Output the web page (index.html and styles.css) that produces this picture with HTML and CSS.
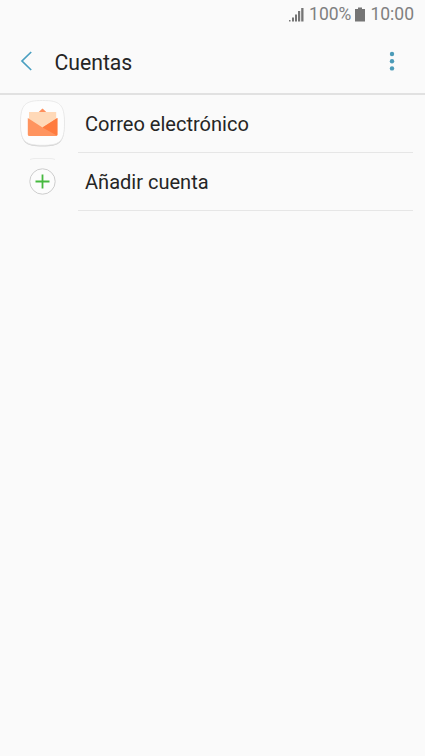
FILE: index.html
```html
<!DOCTYPE html>
<html lang="es">
<head>
<meta charset="utf-8">
<title>Cuentas</title>
<link rel="stylesheet" href="styles.css">
</head>
<body>
<div class="status">
  <svg class="signal" width="15" height="15" viewBox="0 0 15 15"><path d="M0 13h1.500v1.500H0zM3 10.500h2v4H3zM6 7.500h2v7H6zM9 4h2.200v10.500H9zM12.200 1h2.300v13.500h-2.300z"/></svg>
  <span class="percent">100%</span>
  <svg class="battery" width="10" height="15" viewBox="0 0 10 15"><path d="M3 .5h4V2h3v12.500H0V2h3z"/></svg>
  <span class="clock">10:00</span>
</div>
<header class="header">
  <svg class="back" width="12" height="20" viewBox="0 0 12 20"><path d="M11.200 1 2 10l9.200 9"/></svg>
  <h1 class="title">Cuentas</h1>
  <svg class="more" width="6" height="20" viewBox="0 0 6 20"><circle cx="3" cy="3" r="2.200"/><circle cx="3" cy="10.200" r="2.200"/><circle cx="3" cy="17.400" r="2.200"/></svg>
</header>
<main class="list">
  <div class="row">
    <svg class="icon" width="50" height="66" viewBox="-.5 0 50 66">
      <path class="tile-shadow" d="M25 6.500C42 6.500 47 10 47 29S42 51.500 25 51.500 3 48 3 29 8 6.500 25 6.500Z"/>
      <path class="tile" d="M25 5.500C42 5.500 47 9 47 28S42 50.300 25 50.300 3 47 3 28 8 5.500 25 5.500Z"/>
      <path class="flap" d="m20.700 17.500 4.300-3.900 4.300 3.900z"/>
      <path class="letter" d="M11.500 17h27.200V27L25 36 11.500 27z"/>
      <path class="envelope" d="M10.300 23 25 32.500 39.900 23V39.500q0 1.500-1.500 1.500H11.800q-1.500 0-1.500-1.500z"/>
      <path class="fold" d="M25 32.500 39.900 23V39.500q0 .8-.5 1.100z"/>
      <path class="edge" d="M12.500 64.500q2-1 5-1h15q3 0 5 1"/>
    </svg>
    <div class="label">Correo electrónico</div>
  </div>
  <div class="row">
    <svg class="icon" width="50" height="58" viewBox="-.5 0 50 58"><circle class="ring" cx="25" cy="28.500" r="12.700"/><path class="plus" d="M25 21.500v14M18 28.500h14"/></svg>
    <div class="label">Añadir cuenta</div>
  </div>
</main>
</body>
</html>
```
FILE: styles.css
```css
* { box-sizing: border-box; }
body {
  margin: 0;
  min-height: 756px;
  background: #fafafa;
  color: #252525;
  font-family: Roboto, sans-serif;
}
.status {
  height: 28px;
  padding-right: 11px;
  display: flex;
  justify-content: flex-end;
  align-items: center;
  color: #808080;
  font-size: 17.5px;
  line-height: 28px;
}
.signal, .battery { fill: #757575; }
.signal { margin-right: 5px; }
.battery { margin: 0 5px 0 4px; }
.header {
  height: 67px;
  padding: 0 30px 0 20px;
  display: flex;
  align-items: center;
  border-bottom: 2px solid #e1e1e1;
}
.back { fill: none; stroke: #4a9fc0; stroke-width: 1.7; }
.title {
  margin: 4px 0 0 22.5px;
  flex: 1;
  font-size: 21.2px;
  font-weight: 400;
  line-height: 28px;
}
.more { fill: #4c9bb8; }
.row {
  height: 58px;
  padding: 0 12px 0 17px;
  display: flex;
}
.icon { flex: none; overflow: visible; }
.label {
  flex: 1;
  height: 58px;
  margin-left: 11px;
  padding-left: 7px;
  border-bottom: 1px solid #e6e6e6;
  font-size: 20.05px;
  line-height: 58px;
}
.tile-shadow { fill: #d2d2d2; }
.tile { fill: #fdfdfd; stroke: #e6e6e6; stroke-width: .8; }
.flap { fill: #ff8f5c; }
.letter { fill: #ffd9b8; }
.envelope { fill: #ff945f; }
.fold { fill: #ff7b3e; }
.edge { fill: none; stroke: #ececec; }
.ring { fill: #fcfcfc; stroke: #cdcdcd; }
.plus { fill: none; stroke: #46b93f; stroke-width: 1.8; }
```
